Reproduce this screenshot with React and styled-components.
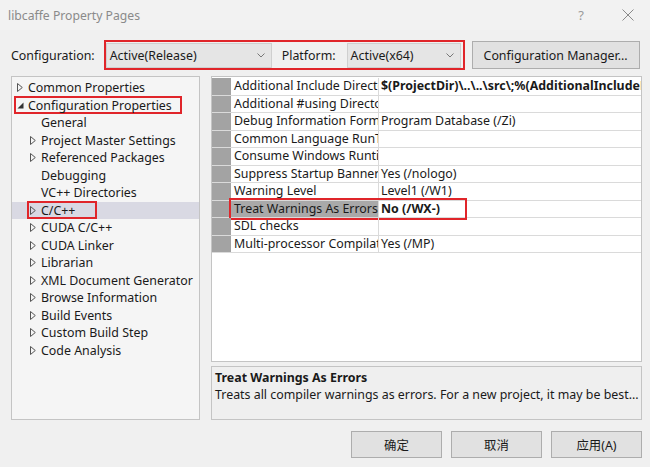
import React from "react";
import styled, { createGlobalStyle } from "styled-components";

const Global = createGlobalStyle`
  html, body { margin: 0; padding: 0; background: #f0f0f0; }
  * { box-sizing: border-box; }
`;

const FONT = `"Noto Sans", "Noto Sans CJK SC", sans-serif`;

const Dialog = styled.div`
  width: 650px;
  height: 467px;
  background: #f0f0f0;
  font-family: ${FONT};
  font-size: 12.4px;
  color: #1a1a1a;
  display: flex;
  flex-direction: column;
  overflow: hidden;
`;

const TitleBar = styled.div`
  height: 30px;
  display: flex;
  align-items: center;
  justify-content: space-between;
  padding: 0 16px 0 8px;
  background: #f2f2f2;
`;

const Title = styled.div`
  color: #8a8a8a;
  font-size: 12.2px;
`;

const TitleButtons = styled.div`
  display: flex;
  align-items: center;
  gap: 38px;
  color: #9a9a9a;
`;

const HelpMark = styled.span`
  font-size: 13px;
`;

const ConfigRow = styled.div`
  display: flex;
  align-items: center;
  margin-top: 10px;
  height: 30px;
  padding-left: 11px;
`;

const Label = styled.span`
  white-space: nowrap;
  margin-right: ${(p) => p.$mr || 0}px;
`;

const Annot = styled.div`
  display: flex;
  align-items: center;
  border: 2px solid #e0252a;
  height: 30px;
  padding: 0 2px 0 0;
  margin-left: 9px;
  margin-right: 7px;
`;

const Select = styled.div`
  width: ${(p) => p.$w}px;
  height: 25px;
  background: #e5e5e5;
  border: 1px solid #cfcfcf;
  display: flex;
  align-items: center;
  justify-content: space-between;
  padding: 0 6px 0 3px;
  margin-right: ${(p) => p.$mr || 0}px;
`;

const Chevron = () => (
  <svg width="8" height="5" viewBox="0 0 8 5">
    <path d="M0.5 0.5 L4 4 L7.5 0.5" fill="none" stroke="#777" strokeWidth="1" />
  </svg>
);

const Button = styled.div`
  height: ${(p) => p.$h || 27}px;
  width: ${(p) => p.$w}px;
  background: #e1e1e1;
  border: 1px solid #adadad;
  display: flex;
  align-items: center;
  justify-content: center;
  white-space: nowrap;
`;

const Body = styled.div`
  display: flex;
  gap: 11px;
  margin-top: 6px;
  padding-left: 11px;
  height: 344px;
`;

const TreePanel = styled.div`
  width: 189px;
  background: #f5f5f5;
  border: 1px solid #c4c4c4;
  padding-top: 2px;
  display: flex;
  flex-direction: column;
`;

const TreeItem = styled.div`
  height: 17.5px;
  display: flex;
  align-items: center;
  padding-left: ${(p) => (p.$level ? 18 : 5)}px;
  background: ${(p) => (p.$selected ? "#d9d9e3" : "transparent")};
  white-space: nowrap;
`;

const Marked = styled.span`
  display: flex;
  align-items: center;
  height: 18px;
  border: ${(p) => (p.$mark ? "2px solid #e0252a" : "2px solid transparent")};
  margin-left: -3px;
  padding-left: 1px;
  padding-right: ${(p) => p.$pr || 2}px;
`;

const ArrowSlot = styled.span`
  width: 11px;
  display: inline-flex;
  align-items: center;
`;

const Collapsed = () => (
  <svg width="6" height="9" viewBox="0 0 6 9">
    <path d="M0.5 0.5 L5.3 4.5 L0.5 8.5 Z" fill="none" stroke="#555" strokeWidth="1" />
  </svg>
);

const Expanded = () => (
  <svg width="7" height="7" viewBox="0 0 7 7">
    <path d="M6.5 0.5 L6.5 6.5 L0.5 6.5 Z" fill="#333" />
  </svg>
);

const RightCol = styled.div`
  width: 431px;
  display: flex;
  flex-direction: column;
  gap: 4px;
`;

const Grid = styled.div`
  height: 288px;
  background: #fff;
  border: 1px solid #c4c4c4;
  padding-top: 1px;
`;

const GridRow = styled.div`
  position: relative;
  height: 17.5px;
  display: flex;
  border-bottom: 1px solid #dadada;
`;

const Strip = styled.div`
  width: 19px;
  background: #a3a3a3;
  flex: none;
`;

const NameCell = styled.div`
  width: 148px;
  flex: none;
  overflow: hidden;
  white-space: nowrap;
  padding-left: 3px;
  line-height: 16.5px;
  border-right: 1px solid #dadada;
  background: ${(p) => (p.$selected ? "#a9a9a9" : "transparent")};
`;

const ValueCell = styled.div`
  flex: 1;
  overflow: hidden;
  white-space: nowrap;
  padding-left: 2px;
  line-height: 16.5px;
  font-weight: ${(p) => (p.$bold ? 700 : 400)};
`;

const RowMark = styled.div`
  position: absolute;
  left: 17px;
  top: -3px;
  width: 238px;
  height: 22px;
  border: 2px solid #e0252a;
  pointer-events: none;
`;

const Desc = styled.div`
  height: 54px;
  border: 1px solid #c4c4c4;
  background: #efefef;
  padding: 2px 0 0 3px;
  line-height: 17px;
  white-space: nowrap;
  overflow: hidden;
`;

const DescTitle = styled.div`
  font-weight: 700;
`;

const Footer = styled.div`
  display: flex;
  justify-content: flex-end;
  gap: 9px;
  padding-right: 8px;
  margin-top: 11px;
`;

const tree = [
  { t: "Common Properties", lv: 0, a: "c" },
  { t: "Configuration Properties", lv: 0, a: "e", mark: true, pr: 8 },
  { t: "General", lv: 1 },
  { t: "Project Master Settings", lv: 1, a: "c" },
  { t: "Referenced Packages", lv: 1, a: "c" },
  { t: "Debugging", lv: 1 },
  { t: "VC++ Directories", lv: 1 },
  { t: "C/C++", lv: 1, a: "c", sel: true, mark: true, pr: 20 },
  { t: "CUDA C/C++", lv: 1, a: "c" },
  { t: "CUDA Linker", lv: 1, a: "c" },
  { t: "Librarian", lv: 1, a: "c" },
  { t: "XML Document Generator", lv: 1, a: "c" },
  { t: "Browse Information", lv: 1, a: "c" },
  { t: "Build Events", lv: 1, a: "c" },
  { t: "Custom Build Step", lv: 1, a: "c" },
  { t: "Code Analysis", lv: 1, a: "c" },
];

const rows = [
  { n: "Additional Include Directories", v: "$(ProjectDir)\\..\\..\\src\\;%(AdditionalIncludeDirectories)", b: true },
  { n: "Additional #using Directories", v: "" },
  { n: "Debug Information Format", v: "Program Database (/Zi)" },
  { n: "Common Language RunTime Support", v: "" },
  { n: "Consume Windows Runtime Extension", v: "" },
  { n: "Suppress Startup Banner", v: "Yes (/nologo)" },
  { n: "Warning Level", v: "Level1 (/W1)" },
  { n: "Treat Warnings As Errors", v: "No (/WX-)", b: true, sel: true },
  { n: "SDL checks", v: "" },
  { n: "Multi-processor Compilation", v: "Yes (/MP)" },
];

export default function App() {
  return (
    <Dialog>
      <Global />
      <TitleBar>
        <Title>libcaffe Property Pages</Title>
        <TitleButtons>
          <HelpMark>?</HelpMark>
          <svg width="12" height="12" viewBox="0 0 12 12">
            <path d="M0.5 0.5 L11.5 11.5 M11.5 0.5 L0.5 11.5" stroke="#8a8a8a" strokeWidth="1" />
          </svg>
        </TitleButtons>
      </TitleBar>
      <ConfigRow>
        <Label>Configuration:</Label>
        <Annot>
          <Select $w={166} $mr={10}>
            <span>Active(Release)</span>
            <Chevron />
          </Select>
          <Label $mr={11}>Platform:</Label>
          <Select $w={114}>
            <span>Active(x64)</span>
            <Chevron />
          </Select>
        </Annot>
        <Button $w={168} $h={28}>Configuration Manager...</Button>
      </ConfigRow>
      <Body>
        <TreePanel>
          {tree.map((it) => (
            <TreeItem key={it.t} $level={it.lv} $selected={it.sel}>
              <Marked $mark={it.mark} $pr={it.pr}>
                <ArrowSlot>
                  {it.a === "c" ? <Collapsed /> : it.a === "e" ? <Expanded /> : null}
                </ArrowSlot>
                {it.t}
              </Marked>
            </TreeItem>
          ))}
        </TreePanel>
        <RightCol>
          <Grid>
            {rows.map((r) => (
              <GridRow key={r.n}>
                <Strip />
                <NameCell $selected={r.sel}>{r.n}</NameCell>
                <ValueCell $bold={r.b}>{r.v}</ValueCell>
                {r.sel && <RowMark />}
              </GridRow>
            ))}
          </Grid>
          <Desc>
            <DescTitle>Treat Warnings As Errors</DescTitle>
            <div>Treats all compiler warnings as errors. For a new project, it may be best...</div>
          </Desc>
        </RightCol>
      </Body>
      <Footer>
        <Button $w={91} $h={27}>确定</Button>
        <Button $w={91} $h={27}>取消</Button>
        <Button $w={91} $h={27}>应用(A)</Button>
      </Footer>
    </Dialog>
  );
}
